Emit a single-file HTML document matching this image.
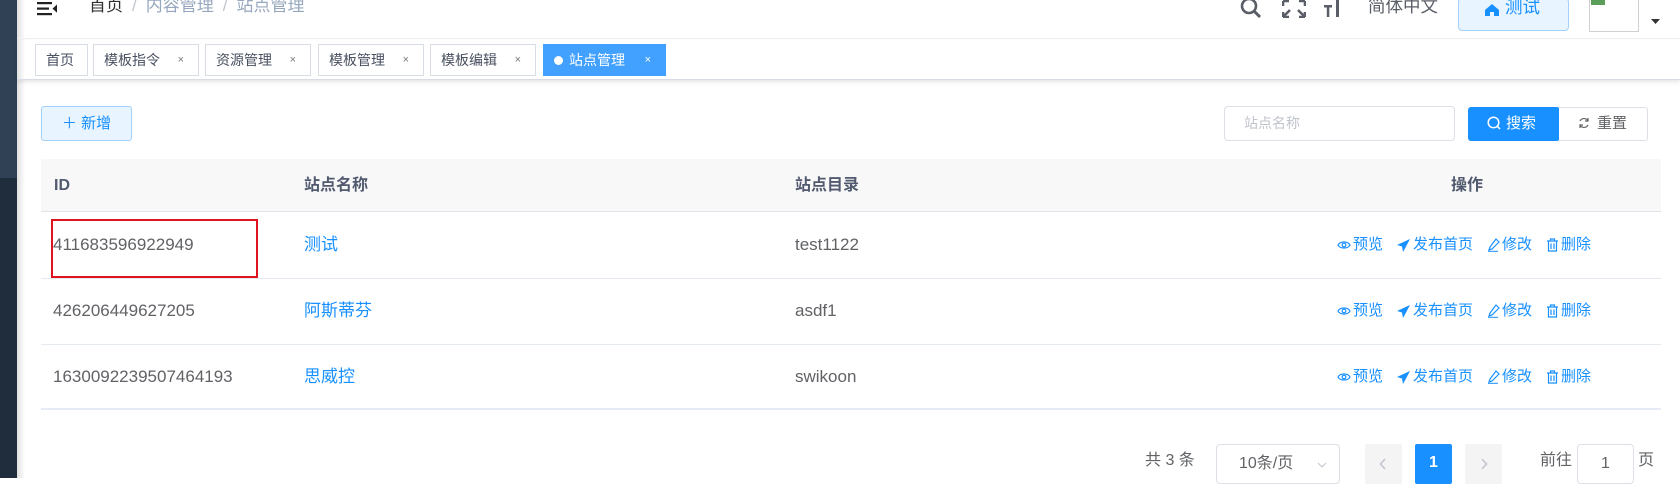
<!DOCTYPE html>
<html><head><meta charset="utf-8"><style>
*{box-sizing:border-box;margin:0;padding:0}
body{width:1680px;height:478px;overflow:hidden;background:#fff;font-family:"Liberation Sans","Noto Sans CJK SC",sans-serif;position:relative;color:#606266}
.abs{position:absolute}
.side{left:0;top:0;width:17px;height:478px;background:#1f2d3d}
.side .t{position:absolute;left:0;top:0;width:17px;height:178px;background:#304156}
.shadow{left:17px;top:0;width:8px;height:478px;background:linear-gradient(90deg,rgba(0,0,0,.12),rgba(0,0,0,0))}
.hdr{left:17px;top:0;right:0;height:39px;border-bottom:1px solid #eef0f3}
.tabs{left:17px;top:40px;right:0;height:40px;border-bottom:1px solid #d8dce5;box-shadow:0 2px 4px rgba(0,0,0,.10)}
.tab{position:absolute;top:44px;height:32px;border:1px solid #d8dce5;font-size:14px;line-height:30px;color:#495060;padding-left:10px;background:#fff}
.tab .x{position:absolute;right:14px;top:0;font-size:11px;color:#777}
.tab.on{background:#42a0ff;border-color:#42a0ff;color:#fff}
.tab.on .x{color:#fff}
.cell{position:absolute;font-size:17px;line-height:20px}
.th{position:absolute;font-size:16px;line-height:20px;font-weight:bold;color:#515a6e}
.act{position:absolute;font-size:15px;color:#1890ff;line-height:18px;white-space:nowrap;display:flex;align-items:center}
.act svg{margin-right:2px}
.act .g{margin-right:14px;display:flex;align-items:center}
</style></head><body>
<div class="abs side"><div class="t"></div></div>
<div class="abs shadow"></div>
<div class="abs hdr"></div>
<svg class="abs" style="left:37px;top:2px" width="21" height="14" viewBox="0 0 21 14"><rect x="0" y="0" width="15" height="2.2" fill="#222"/><rect x="0" y="5.5" width="12" height="2.2" fill="#222"/><rect x="0" y="11" width="15" height="2.2" fill="#222"/><path d="M20 2.5 L15.5 6.6 L20 10.7Z" fill="#222"/></svg>
<div class="abs" style="left:89px;top:-4px;font-size:17px;line-height:20px;color:#303133">首页<span style="color:#c0c4cc;margin:0 9px">/</span><span style="color:#97a8be">内容管理</span><span style="color:#c0c4cc;margin:0 9px">/</span><span style="color:#97a8be">站点管理</span></div>
<svg class="abs" style="left:1240px;top:0" width="22" height="18" viewBox="0 0 22 18"><circle cx="9" cy="6" r="7" fill="none" stroke="#5a5e66" stroke-width="2.6"/><path d="M14 11 L20 17" stroke="#5a5e66" stroke-width="3"/></svg>
<svg class="abs" style="left:1282px;top:0" width="24" height="18" viewBox="0 0 24 18"><path d="M1 1h6M1 1v5M23 1h-6M23 1v5M1 17h6M1 17v-5M23 17h-6M23 17v-5M2 16l6-6M22 16l-6-6" stroke="#5a5e66" stroke-width="2.6" fill="none"/></svg>
<svg class="abs" style="left:1324px;top:0" width="20" height="18" viewBox="0 0 20 18"><rect x="0" y="5" width="8" height="2.5" fill="#5a5e66"/><rect x="2.8" y="5" width="2.5" height="12" fill="#5a5e66"/><rect x="12" y="0" width="3" height="17" fill="#5a5e66"/></svg>
<div class="abs" style="left:1368px;top:-4px;font-size:17.5px;line-height:20px;color:#5a5e66">简体中文</div>
<div class="abs" style="left:1458px;top:-2px;width:111px;height:33px;background:#e8f4ff;border:1px solid #a3d0fd;border-radius:4px"></div>
<svg class="abs" style="left:1485px;top:4px" width="14" height="12" viewBox="0 0 14 12"><path d="M7 0 L14 6 V12 H9 V8 H5 V12 H0 V6Z" fill="#1890ff"/></svg>
<div class="abs" style="left:1505px;top:-3px;font-size:17.5px;line-height:20px;color:#1890ff">测试</div>
<div class="abs" style="left:1589px;top:-2px;width:50px;height:34px;border:1px solid #d0d0d0;border-top:none"></div>
<svg class="abs" style="left:1591px;top:0" width="14" height="5"><rect width="14" height="5" fill="#5a9e5a"/></svg>
<svg class="abs" style="left:1651px;top:19px" width="9" height="6"><path d="M0 0H9L4.5 5Z" fill="#333"/></svg>
<div class="abs tabs"></div>
<div class="tab" style="left:35px;width:53px">首页</div>
<div class="tab" style="left:93px;width:106px">模板指令<span class="x">×</span></div>
<div class="tab" style="left:205px;width:106px">资源管理<span class="x">×</span></div>
<div class="tab" style="left:318px;width:106px">模板管理<span class="x">×</span></div>
<div class="tab" style="left:430px;width:106px">模板编辑<span class="x">×</span></div>
<div class="tab on" style="left:543px;width:123px;padding-left:10px"><span style="display:inline-block;width:9px;height:9px;border-radius:50%;background:#fff;margin-right:6px;vertical-align:0px"></span>站点管理<span class="x">×</span></div>
<div class="abs" style="left:41px;top:106px;width:91px;height:35px;background:#e8f4ff;border:1px solid #a3d0fd;border-radius:3px;font-size:15px;color:#1890ff;line-height:33px;text-align:center">＋ 新增</div>
<div class="abs" style="left:1224px;top:106px;width:231px;height:35px;border:1px solid #dcdfe6;border-radius:4px;font-size:14px;color:#c0c4cc;line-height:33px;padding-left:19px">站点名称</div>
<div class="abs" style="left:1468px;top:107px;width:91px;height:34px;background:#1890ff;border-radius:3px 0 0 3px;color:#fff;font-size:15px;line-height:34px;padding-left:19px"><svg width="14" height="14" viewBox="0 0 14 14" style="vertical-align:-2px;margin-right:5px"><circle cx="6.5" cy="6.5" r="5.3" fill="none" stroke="#fff" stroke-width="1.5"/><path d="M10.3 10.3L13 13" stroke="#fff" stroke-width="1.5"/></svg>搜索</div>
<div class="abs" style="left:1558px;top:107px;width:90px;height:34px;border:1px solid #dcdfe6;border-left:none;border-radius:0 3px 3px 0;color:#606266;font-size:15px;line-height:32px;padding-left:20px"><svg width="12" height="12" viewBox="0 0 12 12" style="vertical-align:-1px;margin-right:7px"><path d="M10 4A4.5 4.5 0 0 0 2 4M2 8A4.5 4.5 0 0 0 10 8" fill="none" stroke="#606266" stroke-width="1.2"/><path d="M10 1v3H7M2 11V8h3" fill="none" stroke="#606266" stroke-width="1.2"/></svg>重置</div>
<div class="abs" style="left:41px;top:159px;width:1620px;height:53px;background:#f8f8f9;border-bottom:1px solid #e1e5eb"></div>
<div class="abs" style="left:41px;top:278px;width:1620px;height:1px;background:#e5e9f0"></div>
<div class="abs" style="left:41px;top:344px;width:1620px;height:1px;background:#e5e9f0"></div>
<div class="abs" style="left:41px;top:408px;width:1620px;height:2px;background:#e6ebf5"></div>
<div class="th" style="left:54px;top:176px">ID</div>
<div class="th" style="left:304px;top:176px">站点名称</div>
<div class="th" style="left:795px;top:176px">站点目录</div>
<div class="th" style="left:1451px;top:176px">操作</div>
<div class="abs" style="left:51px;top:219px;width:207px;height:59px;border:2px solid #e0141e"></div>
<div class="cell" style="left:53px;top:235px">411683596922949</div>
<div class="cell" style="left:304px;top:235px;color:#1890ff">测试</div>
<div class="cell" style="left:795px;top:235px">test1122</div>
<div class="cell" style="left:53px;top:301px">426206449627205</div>
<div class="cell" style="left:304px;top:301px;color:#1890ff">阿斯蒂芬</div>
<div class="cell" style="left:795px;top:301px">asdf1</div>
<div class="cell" style="left:53px;top:367px">1630092239507464193</div>
<div class="cell" style="left:304px;top:367px;color:#1890ff">思威控</div>
<div class="cell" style="left:795px;top:367px">swikoon</div>
<!-- actions -->
<div class="act" style="left:1337px;top:236px"><span class="g"><svg width="14" height="12" viewBox="0 0 14 12"><path d="M1 6C3 2 11 2 13 6C11 10 3 10 1 6Z" fill="none" stroke="#1890ff" stroke-width="1.2"/><circle cx="7" cy="6" r="1.8" fill="none" stroke="#1890ff" stroke-width="1.2"/></svg>预览</span><span class="g"><svg width="14" height="13" viewBox="0 0 14 13"><path d="M13 0L0 6L5 7.5L6 13L8.5 8.5L13 0Z" fill="#1890ff"/></svg>发布首页</span><span class="g"><svg width="13" height="14" viewBox="0 0 13 14"><path d="M9 1L12 4L5 11L2 12L3 9Z" fill="none" stroke="#1890ff" stroke-width="1.2"/><path d="M1 13.3H11" stroke="#1890ff"/></svg>修改</span><span class="g" style="margin:0"><svg width="13" height="14" viewBox="0 0 13 14"><path d="M1 3H12M4.5 3V1H8.5V3M2.5 3V13H10.5V3M5 5.5V11M8 5.5V11" fill="none" stroke="#1890ff" stroke-width="1.2"/></svg>删除</span></div>
<div class="act" style="left:1337px;top:302px"><span class="g"><svg width="14" height="12" viewBox="0 0 14 12"><path d="M1 6C3 2 11 2 13 6C11 10 3 10 1 6Z" fill="none" stroke="#1890ff" stroke-width="1.2"/><circle cx="7" cy="6" r="1.8" fill="none" stroke="#1890ff" stroke-width="1.2"/></svg>预览</span><span class="g"><svg width="14" height="13" viewBox="0 0 14 13"><path d="M13 0L0 6L5 7.5L6 13L8.5 8.5L13 0Z" fill="#1890ff"/></svg>发布首页</span><span class="g"><svg width="13" height="14" viewBox="0 0 13 14"><path d="M9 1L12 4L5 11L2 12L3 9Z" fill="none" stroke="#1890ff" stroke-width="1.2"/><path d="M1 13.3H11" stroke="#1890ff"/></svg>修改</span><span class="g" style="margin:0"><svg width="13" height="14" viewBox="0 0 13 14"><path d="M1 3H12M4.5 3V1H8.5V3M2.5 3V13H10.5V3M5 5.5V11M8 5.5V11" fill="none" stroke="#1890ff" stroke-width="1.2"/></svg>删除</span></div>
<div class="act" style="left:1337px;top:368px"><span class="g"><svg width="14" height="12" viewBox="0 0 14 12"><path d="M1 6C3 2 11 2 13 6C11 10 3 10 1 6Z" fill="none" stroke="#1890ff" stroke-width="1.2"/><circle cx="7" cy="6" r="1.8" fill="none" stroke="#1890ff" stroke-width="1.2"/></svg>预览</span><span class="g"><svg width="14" height="13" viewBox="0 0 14 13"><path d="M13 0L0 6L5 7.5L6 13L8.5 8.5L13 0Z" fill="#1890ff"/></svg>发布首页</span><span class="g"><svg width="13" height="14" viewBox="0 0 13 14"><path d="M9 1L12 4L5 11L2 12L3 9Z" fill="none" stroke="#1890ff" stroke-width="1.2"/><path d="M1 13.3H11" stroke="#1890ff"/></svg>修改</span><span class="g" style="margin:0"><svg width="13" height="14" viewBox="0 0 13 14"><path d="M1 3H12M4.5 3V1H8.5V3M2.5 3V13H10.5V3M5 5.5V11M8 5.5V11" fill="none" stroke="#1890ff" stroke-width="1.2"/></svg>删除</span></div>
<div class="abs" style="left:1145px;top:452px;font-size:16px;color:#606266;line-height:18px">共 3 条</div>
<div class="abs" style="left:1216px;top:444px;width:124px;height:40px;border:1px solid #dcdfe6;border-radius:4px;font-size:16px;line-height:38px;padding-left:22px;color:#606266">10条/页<svg width="10" height="6" viewBox="0 0 10 6" style="position:absolute;right:12px;top:17px"><path d="M1 1L5 5L9 1" fill="none" stroke="#c0c4cc"/></svg></div>
<div class="abs" style="left:1365px;top:444px;width:37px;height:40px;background:#f4f4f5;border-radius:2px"><svg width="8" height="12" style="position:absolute;left:14px;top:14px"><path d="M6 1L1.5 6L6 11" fill="none" stroke="#c0c4cc" stroke-width="1.5"/></svg></div>
<div class="abs" style="left:1415px;top:444px;width:37px;height:40px;background:#1890ff;border-radius:2px;color:#fff;font-weight:bold;font-size:16px;text-align:center;line-height:38px">1</div>
<div class="abs" style="left:1465px;top:444px;width:37px;height:40px;background:#f4f4f5;border-radius:2px"><svg width="8" height="12" style="position:absolute;left:15px;top:14px"><path d="M2 1L6.5 6L2 11" fill="none" stroke="#c0c4cc" stroke-width="1.5"/></svg></div>
<div class="abs" style="left:1540px;top:452px;font-size:16px;line-height:18px">前往</div>
<div class="abs" style="left:1577px;top:444px;width:57px;height:40px;border:1px solid #dcdfe6;border-radius:4px;text-align:center;font-size:16px;line-height:38px">1</div>
<div class="abs" style="left:1638px;top:452px;font-size:16px;line-height:18px">页</div>
</body></html>
